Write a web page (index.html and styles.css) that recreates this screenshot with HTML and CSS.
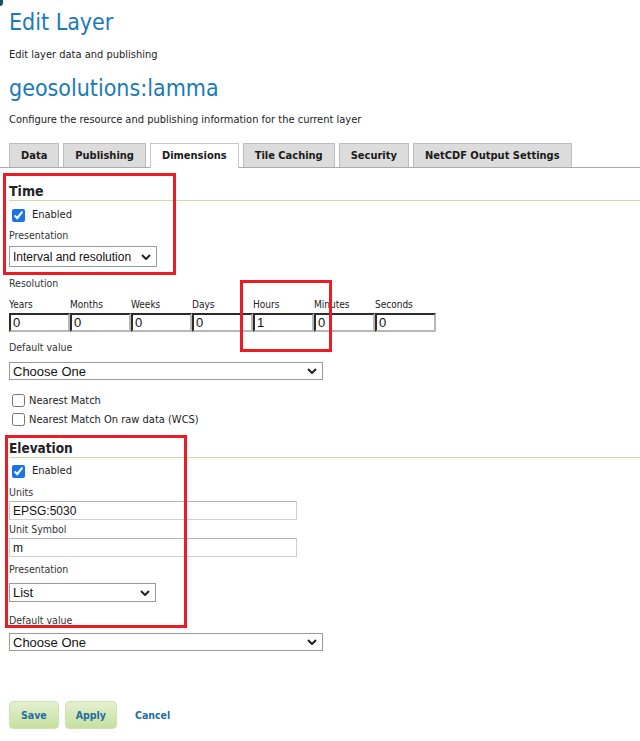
FILE: index.html
```html
<!DOCTYPE html>
<html>
<head>
<meta charset="utf-8">
<link rel="stylesheet" href="styles.css">
</head>
<body>
<div class="corner"></div>
<div class="page">
  <h1 class="title t1">Edit Layer</h1>
  <p class="desc d1">Edit layer data and publishing</p>
  <h2 class="title t2">geosolutions:lamma</h2>
  <p class="desc d2">Configure the resource and publishing information for the current layer</p>

  <ul class="tabs">
    <li class="tab">Data</li>
    <li class="tab">Publishing</li>
    <li class="tab active">Dimensions</li>
    <li class="tab">Tile Caching</li>
    <li class="tab">Security</li>
    <li class="tab">NetCDF Output Settings</li>
  </ul>

  <section class="dim dim-time">
    <h3 class="dim-head">Time</h3>
    <label class="check"><input type="checkbox" checked> <span>Enabled</span></label>
    <div class="lbl lbl-pres">Presentation</div>
    <select class="sel sel-pres"><option>Interval and resolution</option></select>
    <div class="lbl lbl-res">Resolution</div>
    <div class="res">
      <div class="res-item"><span class="res-lbl">Years</span><input class="res-in" value="0"></div>
      <div class="res-item"><span class="res-lbl">Months</span><input class="res-in" value="0"></div>
      <div class="res-item"><span class="res-lbl">Weeks</span><input class="res-in" value="0"></div>
      <div class="res-item"><span class="res-lbl">Days</span><input class="res-in" value="0"></div>
      <div class="res-item"><span class="res-lbl">Hours</span><input class="res-in" value="1"></div>
      <div class="res-item"><span class="res-lbl">Minutes</span><input class="res-in" value="0"></div>
      <div class="res-item"><span class="res-lbl">Seconds</span><input class="res-in" value="0"></div>
    </div>
    <div class="lbl lbl-def">Default value</div>
    <select class="sel sel-wide sel-def1"><option>Choose One</option></select>
    <div class="opts">
      <label class="check2"><input type="checkbox"><span>Nearest Match</span></label>
      <label class="check2"><input type="checkbox"><span>Nearest Match On raw data (WCS)</span></label>
    </div>
  </section>

  <section class="dim dim-elev">
    <h3 class="dim-head">Elevation</h3>
    <label class="check check-elev"><input type="checkbox" checked> <span>Enabled</span></label>
    <div class="lbl lbl-units">Units</div>
    <input class="txt" value="EPSG:5030">
    <div class="lbl lbl-sym">Unit Symbol</div>
    <input class="txt" value="m">
    <div class="lbl lbl-pres2">Presentation</div>
    <select class="sel sel-list"><option>List</option></select>
    <div class="lbl lbl-def2">Default value</div>
    <select class="sel sel-wide sel-def2"><option>Choose One</option></select>
  </section>

  <div class="buttons">
    <button class="btn btn-save">Save</button>
    <button class="btn">Apply</button>
    <a class="cancel" href="#">Cancel</a>
  </div>
</div>

<div class="mark mark-time"></div>
<div class="mark mark-hours"></div>
<div class="mark mark-elev"></div>
</body>
</html>
```

FILE: styles.css
```css
html, body {
  margin: 0;
  padding: 0;
  background: #fff;
}
body {
  font-family: "DejaVu Sans Condensed", "DejaVu Sans", sans-serif;
  color: #222;
  width: 640px;
  height: 741px;
  overflow: hidden;
  position: relative;
}
.corner {
  position: absolute;
  left: 0;
  top: 0;
  width: 3px;
  height: 6px;
  background: #1d4f64;
  border-bottom-right-radius: 3px;
}
.page {
  padding-left: 9px;
}
.title {
  margin: 0;
  font-weight: normal;
  color: #1a7ab8;
  font-size: 23px;
  line-height: 30px;
}
.t1 { padding-top: 7px; }
.t2 { margin-top: 11px; }
.desc {
  margin: 0;
  font-size: 11px;
  line-height: 14px;
  color: #222;
}
.d1 { margin-top: 11px; }
.d2 { margin-top: 10px; }

.tabs {
  list-style: none;
  margin: 16px 0 0 -9px;
  padding: 0 0 0 9px;
  display: flex;
  gap: 4px;
  border-bottom: 1px solid #aaa;
  height: 24px;
}
.tab {
  box-sizing: border-box;
  height: 24px;
  padding: 0 11px;
  background: #dcdcdc;
  border: 1px solid #bdbdbd;
  border-bottom: none;
  font-weight: bold;
  font-size: 11px;
  line-height: 24px;
  color: #1a1a1a;
}
.tab.active {
  background: #fff;
  height: 25px;
  border-color: #c8c8c8;
}

.dim-head {
  margin: 0 -9px 0 0;
  font-size: 14px;
  font-weight: bold;
  line-height: 17px;
  color: #222;
  border-bottom: 1px solid #c6e2a2;
  padding-bottom: 0;
}
.dim-time .dim-head { margin-top: 15px; }
.dim-elev .dim-head { margin-top: 14px; font-size: 13.5px; }

.check {
  display: flex;
  align-items: center;
  gap: 7px;
  font-size: 11px;
  line-height: 16px;
  margin-top: 6px;
  padding-left: 3px;
}
.check.check-elev { margin-top: 5px; }
.check input {
  margin: 0;
  width: 13px;
  height: 13px;
  accent-color: #1a73e8;
}
.lbl {
  font-size: 10.5px;
  line-height: 13px;
  color: #333;
}
.lbl-pres { margin-top: 6px; }
.lbl-res { margin-top: 10px; }
.lbl-def { margin-top: 9px; }

.sel {
  display: block;
  appearance: none;
  -webkit-appearance: none;
  box-sizing: border-box;
  font-family: "Liberation Sans", Arial, sans-serif;
  font-size: 13px;
  color: #111;
  background: #fff url("data:image/svg+xml;utf8,<svg xmlns='http://www.w3.org/2000/svg' width='10' height='6' viewBox='0 0 10 6'><path d='M1 1l4 4 4-4' fill='none' stroke='%23222' stroke-width='2'/></svg>") no-repeat right 5px center;
  border: 1px solid #9a9a9a;
  border-radius: 0;
  padding: 0 0 0 3px;
  margin: 0;
}
.sel-pres { width: 148px; height: 21px; margin-top: 4px; font-size: 12px; }
.sel-wide { width: 314px; height: 18px; }
.sel-def1 { margin-top: 8px; }
.sel-def2 { margin-top: 6px; }
.sel-list { width: 147px; height: 19px; margin-top: 7px; }

.res {
  display: flex;
  margin-top: 8px;
}
.res-item {
  display: flex;
  flex-direction: column;
  width: 61px;
}
.res-lbl {
  font-size: 10px;
  line-height: 13px;
  color: #222;
}
.res-in {
  box-sizing: border-box;
  width: 61px;
  height: 19px;
  margin-top: 2px;
  font-family: "Liberation Sans", Arial, sans-serif;
  font-size: 13px;
  padding: 0 2px;
  border-style: solid;
  border-width: 2px;
  border-color: #2b2b2b #b8b8b8 #b8b8b8 #2b2b2b;
  color: #111;
}

.opts {
  margin-top: 14px;
  display: flex;
  flex-direction: column;
  gap: 6px;
}
.check2 {
  display: flex;
  align-items: center;
  gap: 4px;
  font-size: 11px;
  line-height: 13px;
  padding-left: 3px;
}
.check2 input {
  margin: 0;
  width: 13px;
  height: 13px;
}

.lbl-units { margin-top: 7px; }
.lbl-sym { margin-top: 3px; }
.lbl-pres2 { margin-top: 6px; }
.lbl-def2 { margin-top: 12px; }

.txt {
  display: block;
  box-sizing: border-box;
  width: 288px;
  height: 19px;
  margin-top: 2px;
  font-family: "Liberation Sans", Arial, sans-serif;
  font-size: 12px;
  padding: 0 3px;
  border: 1px solid #d0d0d0;
  border-top-color: #b5b5b5;
  color: #111;
}

.buttons {
  display: flex;
  align-items: center;
  gap: 6px;
  margin-top: 50px;
}
.btn {
  box-sizing: border-box;
  height: 28px;
  padding: 0 10px;
  font-family: "DejaVu Sans Condensed", "DejaVu Sans", sans-serif;
  font-size: 10.5px;
  font-weight: bold;
  color: #1f6da4;
  background: linear-gradient(#e3f0cf, #c6e09f);
  border: 1px solid #cfe4b3;
  border-radius: 4px;
}
.btn.btn-save { padding: 0 11px; }
.cancel {
  margin-left: 12px;
  font-size: 10.5px;
  font-weight: bold;
  color: #1f6da4;
  text-decoration: none;
}

.mark {
  position: absolute;
  border: 3px solid #ec1c24;
  box-sizing: border-box;
}
.mark-time { left: 3px; top: 173px; width: 173px; height: 102px; }
.mark-hours { left: 240px; top: 280px; width: 92px; height: 72px; }
.mark-elev { left: 5px; top: 435px; width: 182px; height: 193px; }
```
